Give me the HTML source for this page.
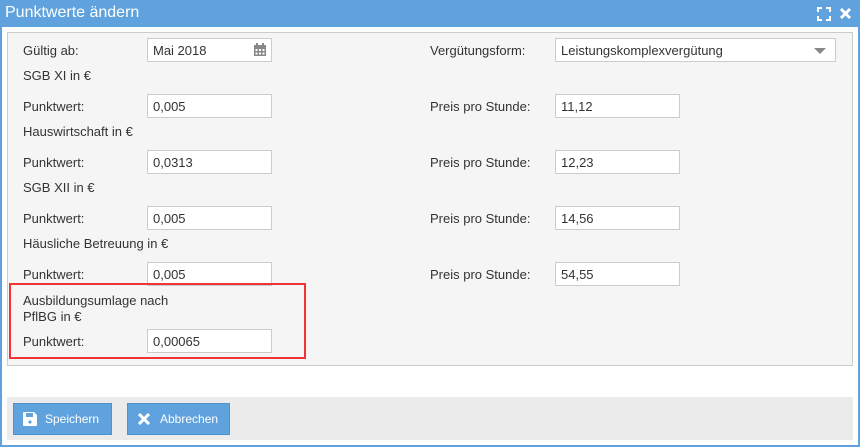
<!DOCTYPE html>
<html><head><style>
*{box-sizing:border-box;margin:0;padding:0}
body{width:860px;height:447px;background:#fff;font-family:"Liberation Sans",Arial,sans-serif;font-size:13px;color:#333;position:relative;overflow:hidden}
.win{position:absolute;left:0;top:0;width:860px;height:447px;border:2px solid #5fa2dd;border-top:none}
.title{position:absolute;left:0;top:0;width:860px;height:27px;background:#5fa2dd;color:#fff;font-size:16px;padding:4px 0 0 5px}
.panel{position:absolute;left:7px;top:32px;width:846px;height:334px;background:#f5f5f5;border:1px solid #ccc}
.foot{position:absolute;left:7px;top:397px;width:846px;height:43px;background:#ebebeb}
.l{position:absolute;font-size:13px}
.in{position:absolute;height:24px;background:#fff;border:1px solid #ccc;padding:4px 0 0 5px;width:125px}
.btn{position:absolute;top:403px;height:32px;background:#5fa2dd;border:1px solid #4d92cf;color:#fff;font-size:12px;padding:8px 0 0 0}
.red{position:absolute;left:9px;top:283px;width:297px;height:76px;border:2px solid #f03434}
</style></head><body>
<div class="win"></div>
<div class="title">Punktwerte ändern
<svg style="position:absolute;left:817px;top:7px" width="14" height="14" viewBox="0 0 14 14" fill="none" stroke="#fff" stroke-width="2"><path d="M1 5V1h4M9 1h4v4M13 9v4H9M5 13H1V9"/></svg>
<svg style="position:absolute;left:839px;top:7px" width="13" height="13" viewBox="0 0 13 13" stroke="#fff" stroke-width="3"><path d="M2 2l9 9M11 2l-9 9"/></svg>
</div>
<div class="panel"></div>
<div class="l" style="left:23px;top:43px">Gültig ab:</div>
<div class="in" style="left:147px;top:38px">Mai 2018
<svg style="position:absolute;right:4px;top:4px" width="14" height="14" viewBox="0 0 14 14"><rect x="1" y="2" width="12" height="11" fill="#888"/><rect x="3" y="0" width="2" height="3" fill="#888"/><rect x="9" y="0" width="2" height="3" fill="#888"/><g fill="#fff"><rect x="2.5" y="6" width="2" height="2"/><rect x="6" y="6" width="2" height="2"/><rect x="9.5" y="6" width="2" height="2"/><rect x="2.5" y="9.5" width="2" height="2"/><rect x="6" y="9.5" width="2" height="2"/><rect x="9.5" y="9.5" width="2" height="2"/></g></svg></div>
<div class="l" style="left:430px;top:43px">Vergütungsform:</div>
<div class="in" style="left:555px;top:38px;width:281px">Leistungskomplexvergütung
<div style="position:absolute;right:9px;top:9px;border-left:6px solid transparent;border-right:6px solid transparent;border-top:6px solid #888"></div></div>

<div class="l" style="left:23px;top:68px">SGB XI in €</div>
<div class="l" style="left:23px;top:99px">Punktwert:</div><div class="in" style="left:147px;top:94px">0,005</div>
<div class="l" style="left:430px;top:99px">Preis pro Stunde:</div><div class="in" style="left:555px;top:94px">11,12</div>

<div class="l" style="left:23px;top:124px">Hauswirtschaft in €</div>
<div class="l" style="left:23px;top:155px">Punktwert:</div><div class="in" style="left:147px;top:150px">0,0313</div>
<div class="l" style="left:430px;top:155px">Preis pro Stunde:</div><div class="in" style="left:555px;top:150px">12,23</div>

<div class="l" style="left:23px;top:180px">SGB XII in €</div>
<div class="l" style="left:23px;top:211px">Punktwert:</div><div class="in" style="left:147px;top:206px">0,005</div>
<div class="l" style="left:430px;top:211px">Preis pro Stunde:</div><div class="in" style="left:555px;top:206px">14,56</div>

<div class="l" style="left:23px;top:236px">Häusliche Betreuung in €</div>
<div class="l" style="left:23px;top:267px">Punktwert:</div><div class="in" style="left:147px;top:262px">0,005</div>
<div class="l" style="left:430px;top:267px">Preis pro Stunde:</div><div class="in" style="left:555px;top:262px">54,55</div>

<div class="l" style="left:23px;top:293px">Ausbildungsumlage nach</div>
<div class="l" style="left:23px;top:309px">PflBG in €</div>
<div class="l" style="left:23px;top:334px">Punktwert:</div><div class="in" style="left:147px;top:329px">0,00065</div>
<div class="red"></div>

<div class="foot"></div>
<div class="btn" style="left:13px;width:99px">
<svg style="position:absolute;left:9px;top:8px" width="14" height="14" viewBox="0 0 14 14"><path d="M0 1a1 1 0 0 1 1-1h10l3 3v10a1 1 0 0 1-1 1H1a1 1 0 0 1-1-1z" fill="#fff"/><rect x="3" y="1" width="7" height="4" fill="#5fa2dd"/><circle cx="7" cy="10" r="1.6" fill="#5fa2dd"/></svg>
<span style="position:absolute;left:31px">Speichern</span></div>
<div class="btn" style="left:127px;width:103px">
<svg style="position:absolute;left:10px;top:9px" width="12" height="12" viewBox="0 0 12 12" stroke="#fff" stroke-width="3"><path d="M1 1l10 10M11 1L1 11"/></svg>
<span style="position:absolute;left:32px">Abbrechen</span></div>
</body></html>
